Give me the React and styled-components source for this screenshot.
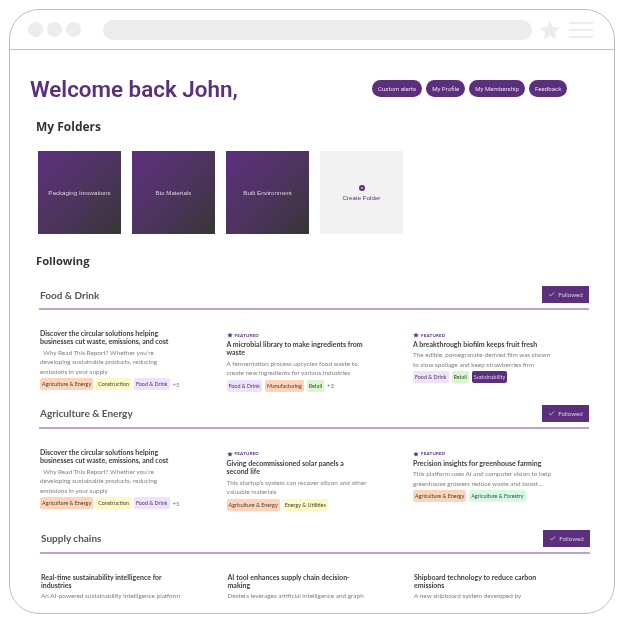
import React from 'react';
import styled, { createGlobalStyle } from 'styled-components';
import { Check } from 'lucide-react';

const GlobalStyle = createGlobalStyle`
  html, body { margin: 0; padding: 0; background: #fff; }
  * { box-sizing: border-box; }
`;

const purple = '#5c2f7c';

const Frame = styled.div`
  width: 606px;
  height: 605px;
  margin: 9px 0 0 9px;
  border: 1px solid #bdbdbd;
  border-radius: 30px;
  overflow: hidden;
  background: #fff;
  font-family: Lato, "Open Sans", sans-serif;
  filter: blur(0.35px);
`;

const Toolbar = styled.div`
  height: 40px;
  display: flex;
  align-items: center;
  padding: 0 20px 0 18px;
  border-bottom: 1px solid #c4c4c4;
`;

const Dots = styled.div`
  display: flex;
  gap: 4px;
  margin-right: 22px;
`;

const Dot = styled.span`
  width: 15px;
  height: 15px;
  border-radius: 50%;
  background: #ececec;
`;

const AddressBar = styled.div`
  width: 429px;
  height: 20px;
  border-radius: 10px;
  background: #ececec;
`;

const BarStar = styled.span`
  height: 22px;
  margin-left: 7px;
`;

const MenuLines = styled.div`
  display: flex;
  flex-direction: column;
  gap: 5px;
  width: 24px;
  margin-left: 8px;
  span {
    height: 2px;
    background: #ececec;
  }
`;

const Main = styled.main`
  padding-left: 20px;
`;

const WelcomeRow = styled.div`
  display: flex;
  align-items: center;
  height: 25px;
  margin-top: 26px;
`;

const Welcome = styled.h1`
  flex: 0 0 342px;
  margin: 0;
  font-family: Roboto, sans-serif;
  font-size: 22.4px;
  font-weight: 600;
  color: ${purple};
  white-space: nowrap;
`;

const Pills = styled.div`
  display: flex;
  gap: 4px;
`;

const Pill = styled.span`
  height: 17px;
  padding: 0 6px;
  display: flex;
  align-items: center;
  border-radius: 9px;
  background: ${purple};
  color: #e6dcec;
  font-family: Roboto, sans-serif;
  font-size: 6.1px;
  white-space: nowrap;
`;

const Heading = styled.h2`
  height: 16px;
  margin: ${p => p.$top}px 0 0 6px;
  font-family: "Open Sans", sans-serif;
  font-size: ${p => p.$size}px;
  line-height: 16px;
  font-weight: 700;
  color: #333;
`;

const Folders = styled.div`
  display: flex;
  gap: 11px;
  margin: 16px 0 0 8px;
`;

const Folder = styled.div`
  width: 83px;
  height: 83px;
  display: flex;
  align-items: center;
  justify-content: center;
  background: linear-gradient(135deg, #5e2f7e 0%, #4e3460 50%, #363636 100%);
  color: #d9d3dd;
  font-family: "Liberation Sans", sans-serif;
  font-size: 6.2px;
`;

const CreateFolder = styled(Folder)`
  flex-direction: column;
  gap: 3px;
  padding-top: 1px;
  background: #f1f1f1;
  color: ${purple};
`;

const PlusDot = styled.span`
  width: 6px;
  height: 6px;
  border-radius: 50%;
  border: 2px solid ${purple};
  background: #cdbcd9;
`;

const Section = styled.section`
  width: 550px;
  margin: ${p => p.$top}px 0 0 ${p => p.$left}px;
`;

const SectionHead = styled.div`
  height: 24px;
  padding: 0 0 5px 1px;
  display: flex;
  align-items: center;
  justify-content: space-between;
  border-bottom: 2px solid #bba3cd;
`;

const SectionTitle = styled.h3`
  margin: 0;
  font-size: 10px;
  font-weight: 700;
  color: #555;
`;

const FollowButton = styled.span`
  width: 47px;
  height: 17px;
  display: flex;
  align-items: center;
  justify-content: center;
  gap: 3px;
  background: ${purple};
  color: #d6cadf;
  font-size: 6.2px;
`;

const Cards = styled.div`
  display: grid;
  grid-template-columns: 186.5px 186.5px 150px;
  margin-top: 19px;
  padding-left: 1px;
`;

const Card = styled.article`
  width: 140px;
  margin-top: ${p => (p.$featured ? 2 : 0)}px;
`;

const Featured = styled.div`
  height: 8px;
  margin-bottom: 1px;
  display: flex;
  align-items: center;
  gap: 2px;
  color: ${purple};
  font-size: 4.5px;
  font-weight: 700;
  letter-spacing: 0.2px;
`;

const CardTitle = styled.h4`
  margin: 0 0 2px;
  font-size: 7px;
  line-height: 8.4px;
  font-weight: 700;
  color: #404040;
`;

const CardText = styled.p`
  margin: 0 0 2px;
  font-size: 6.4px;
  line-height: 9.5px;
  color: #808080;
`;

const Tags = styled.div`
  display: flex;
  align-items: center;
  gap: 3px;
  white-space: nowrap;
`;

const tagColors = {
  orange: ['#fdd4b8', '#4a4038'],
  yellow: ['#fdf8c6', '#4a4838'],
  lilac: ['#efe1ff', '#453f4d'],
  green: ['#daf6d0', '#3d4a38'],
  mint: ['#d6f9e4', '#38483f'],
  purple: [purple, '#d9cbe4'],
};

const Tag = styled.span`
  height: 12px;
  padding: 0 2px;
  display: flex;
  align-items: center;
  border-radius: 2px;
  background: ${p => tagColors[p.$color][0]};
  color: ${p => tagColors[p.$color][1]};
  font-size: 5.4px;
`;

const More = styled.span`
  color: #777;
  font-size: 6px;
`;

const StarIcon = ({ size, color }) => (
  <svg width={size} height={size} viewBox="0 0 24 24" fill={color}>
    <path d="M12 1.5l3.2 7.1 7.8.8-5.8 5.2 1.6 7.7L12 18.4l-6.8 3.9 1.6-7.7L1 9.4l7.8-.8z" />
  </svg>
);

const reportText = '\u00a0\u00a0Why Read This Report? Whether you’re developing sustainable products, reducing emissions in your supply';
const reportTitle = 'Discover the circular solutions helping businesses cut waste, emissions, and cost';
const reportTags = [['Agriculture & Energy', 'orange'], ['Construction', 'yellow'], ['Food & Drink', 'lilac']];

const sections = [
  {
    title: 'Food & Drink', top: 17, left: 9,
    cards: [
      { title: reportTitle, text: reportText, tags: reportTags, more: '+5' },
      {
        featured: true,
        title: 'A microbial library to make ingredients from waste',
        text: 'A fermentation process upcycles food waste to create new ingredients for various industries',
        tags: [['Food & Drink', 'lilac'], ['Manufacturing', 'orange'], ['Retail', 'green']],
        more: '+3',
      },
      {
        featured: true,
        title: 'A breakthrough biofilm keeps fruit fresh',
        text: 'The edible, pomegranate-derived film was shown to slow spoilage and keep strawberries firm',
        tags: [['Food & Drink', 'lilac'], ['Retail', 'green'], ['Sustainability', 'purple']],
      },
    ],
  },
  {
    title: 'Agriculture & Energy', top: 13, left: 9,
    cards: [
      { title: reportTitle, text: reportText, tags: reportTags, more: '+5' },
      {
        featured: true,
        title: 'Giving decommissioned solar panels a second life',
        text: 'This startup’s system can recover silicon and other valuable materials',
        tags: [['Agriculture & Energy', 'orange'], ['Energy & Utilities', 'yellow']],
      },
      {
        featured: true,
        title: 'Precision insights for greenhouse farming',
        text: 'This platform uses AI and computer vision to help greenhouse growers reduce waste and boost...',
        tags: [['Agriculture & Energy', 'orange'], ['Agriculture & Forestry', 'mint']],
      },
    ],
  },
  {
    title: 'Supply chains', top: 19, left: 10,
    cards: [
      { title: 'Real-time sustainability intelligence for industries', text: 'An AI-powered sustainability intelligence platform' },
      { title: 'AI tool enhances supply chain decision-making', text: 'Desteia leverages artificial intelligence and graph' },
      { title: 'Shipboard technology to reduce carbon emissions', text: 'A new shipboard system developed by' },
    ],
  },
];

export default function App() {
  return (
    <>
      <GlobalStyle />
      <Frame>
        <Toolbar>
          <Dots><Dot /><Dot /><Dot /></Dots>
          <AddressBar />
          <BarStar><StarIcon size={22} color="#ececec" /></BarStar>
          <MenuLines><span /><span /><span /></MenuLines>
        </Toolbar>
        <Main>
          <WelcomeRow>
            <Welcome>Welcome back John,</Welcome>
            <Pills>
              <Pill>Custom alerts</Pill>
              <Pill>My Profile</Pill>
              <Pill>My Membership</Pill>
              <Pill>Feedback</Pill>
            </Pills>
          </WelcomeRow>
          <Heading $top={18} $size={12}>My Folders</Heading>
          <Folders>
            <Folder>Packaging Innovations</Folder>
            <Folder>Bio Materials</Folder>
            <Folder>Built Environment</Folder>
            <CreateFolder><PlusDot />Create Folder</CreateFolder>
          </Folders>
          <Heading $top={19} $size={11.2}>Following</Heading>
          {sections.map(section => (
            <Section key={section.title} $top={section.top} $left={section.left}>
              <SectionHead>
                <SectionTitle>{section.title}</SectionTitle>
                <FollowButton><Check size={7} strokeWidth={3} />Followed</FollowButton>
              </SectionHead>
              <Cards>
                {section.cards.map(card => (
                  <Card key={card.title} $featured={card.featured}>
                    {card.featured && <Featured><StarIcon size={6} color={purple} />FEATURED</Featured>}
                    <CardTitle>{card.title}</CardTitle>
                    <CardText>{card.text}</CardText>
                    {card.tags && (
                      <Tags>
                        {card.tags.map(([label, color]) => <Tag key={label} $color={color}>{label}</Tag>)}
                        {card.more && <More>{card.more}</More>}
                      </Tags>
                    )}
                  </Card>
                ))}
              </Cards>
            </Section>
          ))}
        </Main>
      </Frame>
    </>
  );
}
